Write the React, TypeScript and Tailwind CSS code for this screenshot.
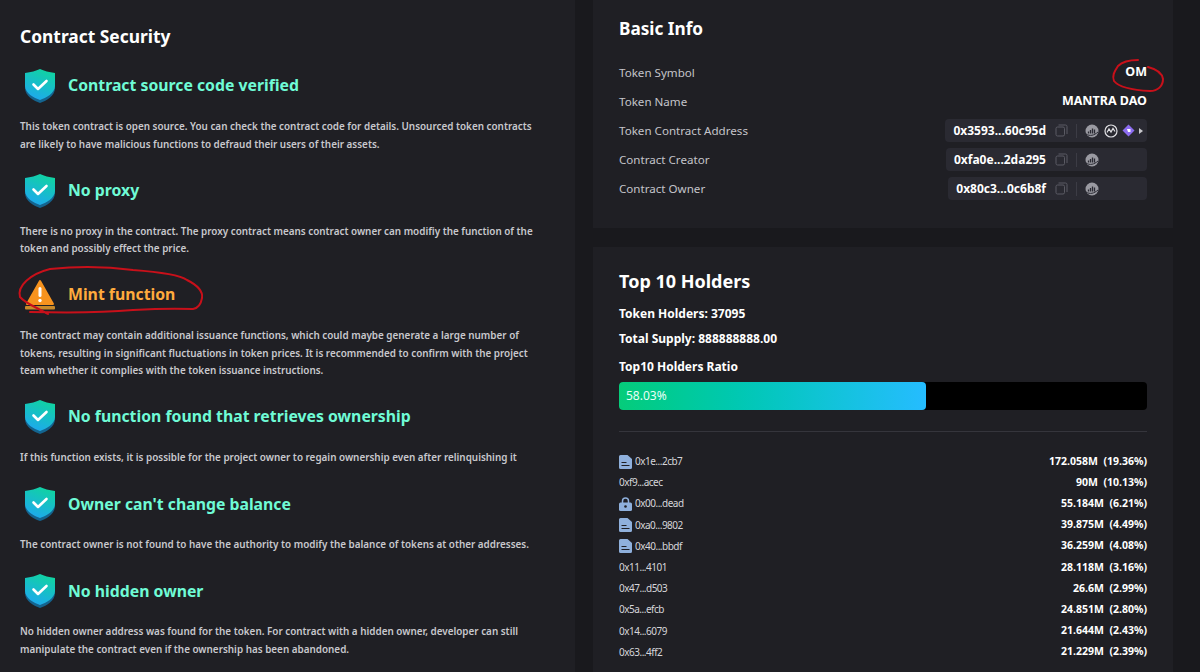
import type { ReactNode } from "react";

const font = { fontFamily: '"Noto Sans", "Open Sans", sans-serif' };

function Shield({ id }: { id: string }) {
  return (
    <svg width="32" height="36" viewBox="0 0 32 36" className="shrink-0">
      <defs>
        <linearGradient id={id} x1="0.7" y1="0" x2="0.3" y2="1">
          <stop offset="0" stopColor="#10d4a0" />
          <stop offset="1" stopColor="#1ea8f0" />
        </linearGradient>
      </defs>
      <path d="M1 9v11c0 8 9 13 15 15 6-2 15-7 15-15V9z" fill="#14648f" />
      <path d="M16 1c4 2 9 3 15 4v13c0 7-9 12-15 14C10 30 1 25 1 18V5c6-1 11-2 15-4z" fill={`url(#${id})`} />
      <path d="M9.500 16.500l4.500 4.500 8.500-8" fill="none" stroke="#fff" strokeWidth="2.600" strokeLinecap="round" strokeLinejoin="round" />
    </svg>
  );
}

function Warning() {
  return (
    <svg width="32" height="34" viewBox="0 0 32 34" className="shrink-0">
      <path d="M16 3 L29 26 H3 Z" fill="#f7931e" stroke="#f7931e" strokeWidth="2" strokeLinejoin="round" />
      <rect x="1" y="28" width="30" height="3.500" rx="1" fill="#c98a2a" />
      <rect x="14.500" y="9" width="3" height="10" rx="1.500" fill="#fff" />
      <circle cx="16" cy="22.500" r="1.700" fill="#fff" />
    </svg>
  );
}

function Section({ icon, title, warn, children }: { icon: ReactNode; title: string; warn?: boolean; children: ReactNode }) {
  return (
    <div className="mb-[20.6px]">
      <div className="flex items-center h-[34px] pl-1 gap-3">
        {icon}
        <span className={warn ? "text-[15.800px] font-bold text-[#ffab3d]" : "text-[15.800px] font-bold text-[#6ffbd6]"}>{title}</span>
      </div>
      <p className="mt-[15px] text-[9.900px] font-semibold leading-[17.5px] text-[#c8c8cd]">{children}</p>
    </div>
  );
}

function Coin() {
  return (
    <svg width="14" height="14" viewBox="0 0 14 14">
      <circle cx="7" cy="7" r="6.500" fill="#9a9aa2" />
      <path d="M3.500 9.500V7.500M5.500 9.500V6M7.500 9.500V4.500M9.500 9.500V5.500" stroke="#2a2a33" strokeWidth="1.300" />
      <path d="M1 10c4 2.500 8 1.500 12-2" fill="none" stroke="#2a2a33" strokeWidth="1" />
    </svg>
  );
}

function Copy() {
  return (
    <svg width="13" height="13" viewBox="0 0 13 13" fill="none" stroke="#5b5b64" strokeWidth="1">
      <rect x="1" y="3" width="8.500" height="9" rx="1.500" />
      <path d="M3.500 1h7a1.500 1.500 0 0 1 1.500 1.500V10" />
    </svg>
  );
}

function Chip({ address, extra }: { address: string; extra?: boolean }) {
  return (
    <div className="flex items-center h-[23px] rounded bg-[#2a2a32] pl-2 pr-1">
      <span className="text-xs font-bold text-white">{address}</span>
      <span className="ml-[9px]"><Copy /></span>
      <span className="w-px h-3.5 bg-[#3c3c45] mx-2" />
      <Coin />
      {extra ? (
        <span className="flex items-center gap-[4px] ml-[5px]">
          <svg width="14" height="14" viewBox="0 0 14 14">
            <circle cx="7" cy="7" r="6" fill="none" stroke="#e0e0e4" strokeWidth="1.200" />
            <path d="M3 8.500l2-3.500 2 3 2-3.500 2 3" fill="none" stroke="#e0e0e4" strokeWidth="1.200" />
          </svg>
          <svg width="13" height="13" viewBox="0 0 13 13">
            <path d="M6.500 0.500l6 6-6 6-6-6z" fill="#8c6cf0" />
            <path d="M5 5h3.500v3H6z" fill="#fff" />
          </svg>
          <svg width="4" height="6" viewBox="0 0 4 6"><path d="M0 0l4 3-4 3z" fill="#c8c8cc" /></svg>
        </span>
      ) : (
        <span className="w-[44px]" />
      )}
    </div>
  );
}

function InfoRow({ label, children }: { label: string; children: ReactNode }) {
  return (
    <div className="flex items-center justify-between h-[29px]">
      <span className="text-[11.600px] text-[#c4c4ca]">{label}</span>
      {children}
    </div>
  );
}

function FileIcon() {
  return (
    <svg width="13" height="14" viewBox="0 0 13 14" className="mr-[3px]">
      <path d="M1.500 0H8.500l4.500 4v8.500a1.500 1.500 0 0 1-1.500 1.500h-10A1.500 1.500 0 0 1 0 12.500v-11A1.500 1.500 0 0 1 1.500 0z" fill="#8fb0dc" />
      <path d="M2.500 7.500h5M2.500 10.500h8" stroke="#1f1f24" strokeWidth="1.200" />
    </svg>
  );
}

function LockIcon() {
  return (
    <svg width="13" height="14" viewBox="0 0 13 14" className="mr-[3px]">
      <path d="M3.500 6V4a3 3 0 0 1 6 0v2" fill="none" stroke="#8fb0dc" strokeWidth="1.500" />
      <rect x="0" y="5.500" width="13" height="8.500" rx="1.500" fill="#8fb0dc" />
      <circle cx="6.500" cy="9.500" r="1.300" fill="#1f1f24" />
    </svg>
  );
}

const holders = [
  { addr: "0x1e...2cb7", amount: "172.058M", pct: "(19.36%)", icon: "file" },
  { addr: "0xf9...acec", amount: "90M", pct: "(10.13%)", icon: "" },
  { addr: "0x00...dead", amount: "55.184M", pct: "(6.21%)", icon: "lock" },
  { addr: "0xa0...9802", amount: "39.875M", pct: "(4.49%)", icon: "file" },
  { addr: "0x40...bbdf", amount: "36.259M", pct: "(4.08%)", icon: "file" },
  { addr: "0x11...4101", amount: "28.118M", pct: "(3.16%)", icon: "" },
  { addr: "0x47...d503", amount: "26.6M", pct: "(2.99%)", icon: "" },
  { addr: "0x5a...efcb", amount: "24.851M", pct: "(2.80%)", icon: "" },
  { addr: "0x14...6079", amount: "21.644M", pct: "(2.43%)", icon: "" },
  { addr: "0x63...4ff2", amount: "21.229M", pct: "(2.39%)", icon: "" },
];

export default function App() {
  return (
    <div style={font} className="relative flex h-[672px] w-[1200px] overflow-hidden bg-[#19191d] text-white">
      <div className="w-[575px] h-full bg-[#1f1f24] pl-5 pt-[23px]">
        <h2 className="text-[17.400px] font-bold leading-[26px] mb-5">Contract Security</h2>
        <Section icon={<Shield id="s1" />} title="Contract source code verified">
          This token contract is open source. You can check the contract code for details. Unsourced token contracts
          <br />
          are likely to have malicious functions to defraud their users of their assets.
        </Section>
        <Section icon={<Shield id="s2" />} title="No proxy">
          There is no proxy in the contract. The proxy contract means contract owner can modifiy the function of the
          <br />
          token and possibly effect the price.
        </Section>
        <Section icon={<Warning />} title="Mint function" warn>
          The contract may contain additional issuance functions, which could maybe generate a large number of
          <br />
          tokens, resulting in significant fluctuations in token prices. It is recommended to confirm with the project
          <br />
          team whether it complies with the token issuance instructions.
        </Section>
        <Section icon={<Shield id="s3" />} title="No function found that retrieves ownership">
          If this function exists, it is possible for the project owner to regain ownership even after relinquishing it
        </Section>
        <Section icon={<Shield id="s4" />} title="Owner can't change balance">
          The contract owner is not found to have the authority to modify the balance of tokens at other addresses.
        </Section>
        <Section icon={<Shield id="s5" />} title="No hidden owner">
          No hidden owner address was found for the token. For contract with a hidden owner, developer can still
          <br />
          manipulate the contract even if the ownership has been abandoned.
        </Section>
      </div>

      <div className="ml-[18px] w-[580px] flex flex-col gap-[19px]">
        <div className="h-[228px] bg-[#1f1f24] px-[26px] pt-[16px]">
          <h2 className="text-[17.200px] font-bold leading-[26px] mb-4">Basic Info</h2>
          <InfoRow label="Token Symbol"><span className="text-[12.500px] font-bold">OM</span></InfoRow>
          <InfoRow label="Token Name"><span className="text-[12.500px] font-bold">MANTRA DAO</span></InfoRow>
          <InfoRow label="Token Contract Address"><Chip address="0x3593...60c95d" extra /></InfoRow>
          <InfoRow label="Contract Creator"><Chip address="0xfa0e...2da295" /></InfoRow>
          <InfoRow label="Contract Owner"><Chip address="0x80c3...0c6b8f" /></InfoRow>
        </div>

        <div className="flex-1 bg-[#1f1f24] px-[26px] pt-[20px]">
          <h2 className="text-lg font-bold leading-[28px]">Top 10 Holders</h2>
          <p className="mt-[9px] text-xs font-bold leading-[20px]">Token Holders: 37095</p>
          <p className="mt-[5px] text-xs font-bold leading-[20px]">Total Supply: 888888888.00</p>
          <p className="mt-[8px] text-xs font-bold leading-[20px]">Top10 Holders Ratio</p>
          <div className="mt-[5px] h-[28px] rounded bg-black">
            <div className="flex items-center h-full w-[307px] rounded bg-gradient-to-r from-[#06cc7a] to-[#25bcff] pl-[7px] text-xs text-[#e8fff6]">
              58.03%
            </div>
          </div>
          <div className="mt-[21px] h-px bg-[#35353c]" />
          <div className="mt-[19px]">
            {holders.map((h) => (
              <div key={h.addr} className="flex items-center justify-between h-[21.2px]">
                <span className="flex items-center text-[10px] tracking-[-0.5px] text-[#d6d6da]">
                  {h.icon === "file" && <FileIcon />}
                  {h.icon === "lock" && <LockIcon />}
                  {h.addr}
                </span>
                <span className="text-[10.500px] font-bold whitespace-pre">{h.amount}  {h.pct}</span>
              </div>
            ))}
          </div>
        </div>
      </div>

      {/* red marker scribbles drawn over the screenshot */}
      <svg className="absolute left-0 top-0 pointer-events-none" width="1200" height="672" fill="none" stroke="#c8101a" strokeWidth="2" strokeLinecap="round">
        <path d="M48 314C38 308 26 304 20 297C17 286 30 274 50 269C80 266 110 267 133 270C160 272 180 275 187 280C199 286 203 292 202 298C201 304 199 308 193 309C170 308 150 309 133 310C100 313 70 313 30 312" />
        <path d="M1138 60C1128 60 1122 62 1118 66C1114 72 1112 76 1114 81C1118 86 1130 90 1150 91C1158 91 1163 86 1163 79C1162 73 1156 69 1148 67" />
      </svg>
    </div>
  );
}
